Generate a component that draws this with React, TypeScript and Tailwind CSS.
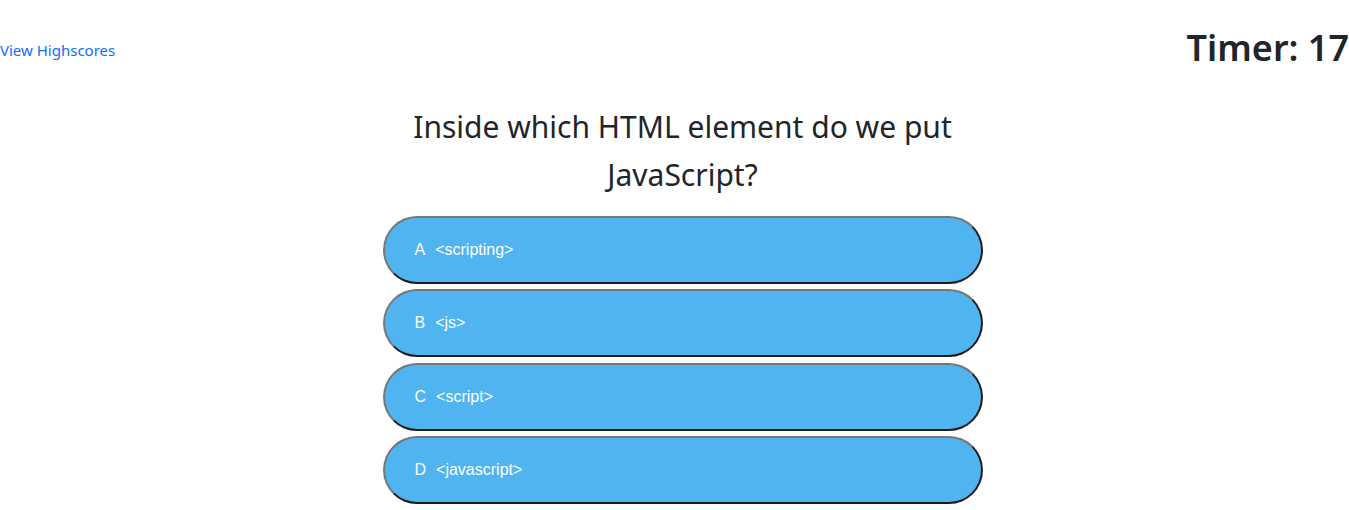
import React from "react";

const answers = [
  { k: "A", t: "<scripting>" },
  { k: "B", t: "<js>" },
  { k: "C", t: "<script>" },
  { k: "D", t: "<javascript>" },
];

export default function App() {
  return (
    <div className="w-[1349px] h-[510px] bg-white overflow-hidden">
      <header className="flex justify-between items-center h-[96px] font-['Segoe_UI','Noto_Sans',sans-serif]">
        <a className="text-[15px] text-[#0d6efd] mt-[4px] leading-[24px]">View Highscores</a>
        <h1 className="text-[36px] font-semibold text-[#212529] leading-[48px]">Timer: 17</h1>
      </header>
      <main className="flex justify-center pl-[16px]">
        <div className="w-[600px] flex flex-col">
          <p className="mt-[7px] mb-[17px] text-center text-[30px] leading-[48px] text-[#212529] font-['Segoe_UI','Noto_Sans',sans-serif]">
            Inside which HTML element do we put JavaScript?
          </p>
          <div className="flex flex-col gap-[5.33px]">
            {answers.map((a) => (
              <button
                key={a.k}
                className="h-[68px] w-[600px] rounded-[34px] bg-[#4fb4f0] border-2 border-t-[#777777] border-l-[#777777] border-b-[#1c1c1c] border-r-[#1c1c1c] flex items-center pl-[30px] gap-[10px] text-white text-[16px] font-['Liberation_Sans',Arial,sans-serif]"
              >
                <span>{a.k}</span>
                <span>{a.t}</span>
              </button>
            ))}
          </div>
        </div>
      </main>
    </div>
  );
}
